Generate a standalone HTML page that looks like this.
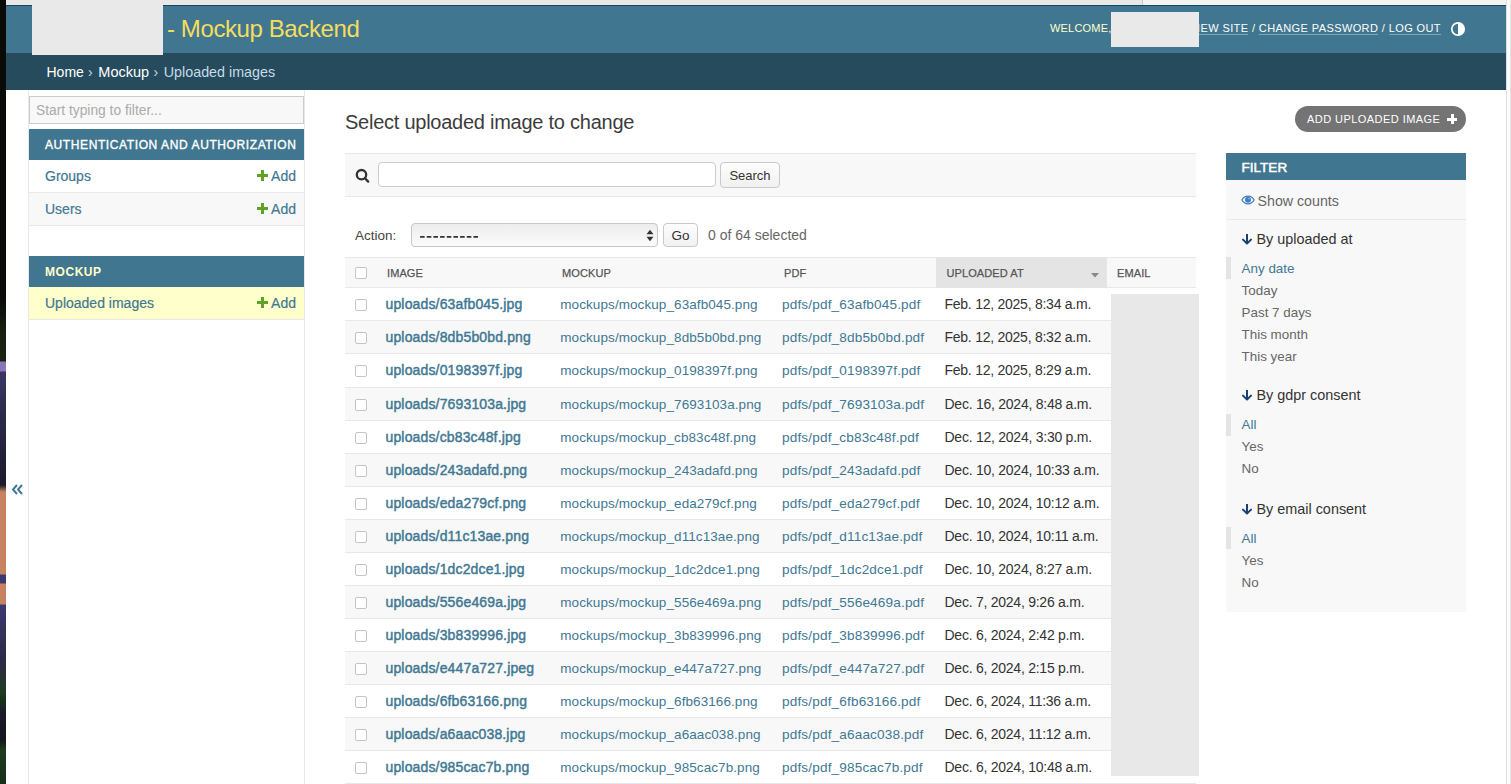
<!DOCTYPE html>
<html><head><meta charset="utf-8">
<style>
*{box-sizing:border-box}
html,body{margin:0;padding:0}
body{width:1511px;height:784px;overflow:hidden;position:relative;background:#fff;font-family:"Liberation Sans",sans-serif;color:#333}
.abs{position:absolute}
a{text-decoration:none;color:#417893}
#wall{left:0;top:0;width:6px;height:784px;background:linear-gradient(180deg,#0a0b09 0px,#0a0b09 300px,#16200f 330px,#1a2414 361px,#8a76b8 362px,#8a76b8 371px,#3a3766 372px,#2a2848 420px,#1c1a2c 485px,#c7835f 492px,#c7835f 574px,#3b3a6e 575px,#3b3a6e 583px,#c7835f 584px,#c7835f 604px,#3b3a6e 605px,#2b2a48 660px,#1f3a1f 692px,#14301a 702px,#1a1a2a 712px,#15151f 740px,#1d3b1d 750px,#15301a 784px)}
#topstrip{left:6px;top:0;width:1500px;height:5px;background:linear-gradient(90deg,#e9e8e6 0,#e9e8e6 1136px,#c8c8c8 1136px,#c8c8c8 1137px,#f3f4f2 1137px)}
#rstrip{left:1506px;top:0;width:5px;height:784px;background:#fcfcfc;border-left:1.5px solid #dedede;border-right:1.5px solid #e6e6e6}
#header{left:6px;top:5px;width:1500px;height:48px;background:#417690;border-top:1px solid #0d4a68}
#logo{left:32px;top:0;width:131px;height:55px;background:#e9e9e9}
#brand{left:167px;top:15px;font-size:24px;color:#f5dd5d;letter-spacing:-0.4px;white-space:nowrap;line-height:28px}
#usertools{left:1050px;top:22px;font-size:11px;letter-spacing:0.4px;color:#ffc;white-space:nowrap;line-height:13px}
#usertools2{right:70px;top:22px;font-size:11px;letter-spacing:0.4px;color:#ffc;white-space:nowrap;line-height:13px}
#usertools2 a{color:#fff;border-bottom:1px solid rgba(255,255,255,0.35)}
#ublock{left:1111px;top:12px;width:88px;height:35px;background:#e9e9e9}
#crumbs{left:6px;top:53px;width:1500px;height:37px;background:#264b5d;color:#c4dce8;font-size:14px;line-height:17px;padding:11px 0 0 40px;white-space:nowrap}
#crumbs a{color:#fff}
#toggle{left:6px;top:90px;width:23px;height:694px;border-right:1px solid #e8e8e8;background:#fff}
#nav{left:29px;top:90px;width:276px;height:694px;border-right:1px solid #e8e8e8}

#navfilter{left:29px;top:96px;width:275px;height:28px;border:1px solid #ccc;background:#f8f8f8;color:#ababab;font-size:13.8px;line-height:28px;padding-left:6px;white-space:nowrap}
.cap{position:absolute;left:29px;width:275px;background:#417690;color:#fff;font-size:12px;letter-spacing:0.6px;padding-left:16px;white-space:nowrap}
.nrow{position:absolute;left:29px;width:275px;border-bottom:1px solid #e8e8e8;font-size:14px;white-space:nowrap;padding-left:16px}
.nrow a{color:#417893;-webkit-text-stroke:0.2px #417893}
.addl{position:absolute;right:8px;color:#417893;-webkit-text-stroke:0.2px #417893}
.plus{display:inline-block;position:relative;width:11px;height:11px;margin-right:3px;vertical-align:0px}
.plus:before{content:"";position:absolute;left:0;top:4px;width:11px;height:3px;background:#5fa225}
.plus:after{content:"";position:absolute;left:4px;top:0;width:3px;height:11px;background:#5fa225}

#h1{left:345px;top:110px;font-size:20px;letter-spacing:-0.25px;color:#3c3c3c;line-height:24px;white-space:nowrap}
#addbtn{left:1295px;top:106px;width:171px;height:26px;border-radius:13px;background:#747474;color:#fff;font-size:11px;letter-spacing:0.45px;line-height:26px;padding-left:12px;white-space:nowrap}
.wplus{position:absolute;width:10px;height:10px}
.wplus:before{content:"";position:absolute;left:0;top:3.5px;width:10px;height:3px;background:#fff}
.wplus:after{content:"";position:absolute;left:3.5px;top:0;width:3px;height:10px;background:#fff}
#toolbar{left:345px;top:153px;width:851px;height:44px;background:#f8f8f8;border-top:1px solid #e8e8e8;border-bottom:1px solid #e8e8e8}
#sinput{left:378px;top:162px;width:338px;height:25px;border:1px solid #ccc;border-radius:4px;background:#fff}
.btn{position:absolute;border:1px solid #c9c9c9;border-radius:4px;background:linear-gradient(#fdfdfd,#f1f1f1);color:#333;font-size:13px;text-align:center;white-space:nowrap}
#actlabel{left:355px;top:228px;font-size:13.5px;color:#444;line-height:16px;white-space:nowrap}
#select{left:411px;top:223px;width:247px;height:24px;border:1px solid #c6c6c6;border-radius:4px;background:linear-gradient(#ededed,#fbfbfb);font-size:13px;white-space:nowrap}
#selcount{left:708px;top:227px;font-size:14px;color:#666;line-height:17px;white-space:nowrap}
.t{position:absolute;white-space:nowrap}
.cb{position:absolute;width:12px;height:12px;border:1px solid #c4c4c4;border-radius:2px;background:#fff}
</style></head><body>
<div id="wall" class="abs"></div>
<div id="topstrip" class="abs"></div>
<div id="header" class="abs"></div>
<div id="brand" class="abs">- Mockup Backend</div>
<div id="usertools" class="abs" style="left:1050px;letter-spacing:0.2px">WELCOME,</div>
<div id="usertools2" class="abs"><a>VIEW SITE</a> / <a>CHANGE PASSWORD</a> / <a>LOG OUT</a></div>
<svg class="abs" style="left:1450px;top:21px" width="16" height="16" viewBox="0 0 16 16"><circle cx="8" cy="8" r="6.2" fill="none" stroke="#fff" stroke-width="1.7"/><path d="M8 1.8A6.2 6.2 0 0 1 8 14.2Z" fill="#fff"/></svg>
<div id="ublock" class="abs"></div>
<div id="crumbs" class="abs"></div>
<div class="t" style="left:46.5px;top:64px;font-size:14px;line-height:17px;color:#fff">Home</div>
<div class="t" style="left:88px;top:64px;font-size:14px;line-height:17px;color:#c4dce8">›</div>
<div class="t" style="left:98.3px;top:64px;font-size:14.5px;line-height:17px;color:#fff">Mockup</div>
<div class="t" style="left:153.5px;top:64px;font-size:14px;line-height:17px;color:#c4dce8">›</div>
<div class="t" style="left:163.8px;top:64px;font-size:14.3px;line-height:17px;color:#c4dce8">Uploaded images</div>
<div id="logo" class="abs"></div>
<div id="rstrip" class="abs"></div>
<div id="toggle" class="abs"></div>
<div id="nav" class="abs"></div>

<div id="navfilter" class="abs">Start typing to filter...</div>
<div class="cap" style="top:129px;height:31px;line-height:33px;-webkit-text-stroke:0.35px #fff">AUTHENTICATION AND AUTHORIZATION</div>
<div class="nrow" style="top:160px;height:33px;line-height:32px;background:#fff"><a>Groups</a><span class="addl"><span class="plus"></span>Add</span></div>
<div class="nrow" style="top:193px;height:33px;line-height:32px;background:#f8f8f8"><a>Users</a><span class="addl"><span class="plus"></span>Add</span></div>
<div class="cap" style="top:256px;height:31px;line-height:33px;color:#ffc;font-weight:700;letter-spacing:0.55px">MOCKUP</div>
<div class="nrow" style="top:287px;height:33px;line-height:32px;background:#ffc"><a>Uploaded images</a><span class="addl"><span class="plus"></span>Add</span></div>
<svg class="abs" style="left:10px;top:482px" width="16" height="14" viewBox="0 0 16 14"><path d="M7 3L3 7.5L7 12M12 3L8 7.5L12 12" fill="none" stroke="#417893" stroke-width="2" stroke-linejoin="miter" stroke-linecap="butt"/></svg>

<div id="h1" class="abs">Select uploaded image to change</div>
<div id="addbtn" class="abs">ADD UPLOADED IMAGE<span class="wplus" style="left:152px;top:8px"></span></div>
<div id="toolbar" class="abs"></div>
<svg class="abs" style="left:354px;top:167px" width="16" height="17" viewBox="0 0 16 17"><circle cx="7.5" cy="7.7" r="4.7" fill="none" stroke="#333" stroke-width="2.3"/><line x1="11" y1="11.2" x2="14.2" y2="14.6" stroke="#333" stroke-width="2.3" stroke-linecap="round"/></svg>
<div id="sinput" class="abs"></div>
<div class="btn" style="left:720px;top:162px;width:60px;height:26px;line-height:26px">Search</div>
<div id="actlabel" class="abs">Action:</div>
<div id="select" class="abs"><svg style="position:absolute;left:8.2px;top:11.5px" width="60" height="3"><rect x="0.00" y="0" width="4.7" height="1.7" rx="0.5" fill="#333"/><rect x="6.67" y="0" width="4.7" height="1.7" rx="0.5" fill="#333"/><rect x="13.34" y="0" width="4.7" height="1.7" rx="0.5" fill="#333"/><rect x="20.01" y="0" width="4.7" height="1.7" rx="0.5" fill="#333"/><rect x="26.68" y="0" width="4.7" height="1.7" rx="0.5" fill="#333"/><rect x="33.35" y="0" width="4.7" height="1.7" rx="0.5" fill="#333"/><rect x="40.02" y="0" width="4.7" height="1.7" rx="0.5" fill="#333"/><rect x="46.69" y="0" width="4.7" height="1.7" rx="0.5" fill="#333"/><rect x="53.36" y="0" width="4.7" height="1.7" rx="0.5" fill="#333"/></svg>
<svg style="position:absolute;left:234px;top:5px" width="8" height="13" viewBox="0 0 8 13"><path d="M0.5 5.2 L4 0.8 L7.5 5.2Z M0.5 7.8 L4 12.2 L7.5 7.8Z" fill="#333"/></svg></div>
<div class="btn" style="left:663px;top:223px;width:35px;height:24px;line-height:24px;font-size:13.5px">Go</div>
<div id="selcount" class="abs">0 of 64 selected</div>
<!--TABLE-->
<div class="abs" style="left:345px;top:257px;width:851px;height:31px;background:#f8f8f8;border-top:1px solid #e8e8e8;border-bottom:1px solid #e8e8e8"></div>
<div class="abs" style="left:936px;top:257px;width:171px;height:31px;background:#e4e4e4"></div>
<div class="cb" style="left:355px;top:267px"></div>
<div class="t" style="left:387px;top:266.39px;font-size:11px;line-height:14px;color:#555;font-weight:400;letter-spacing:0.1px;-webkit-text-stroke:0.25px #555;">IMAGE</div>
<div class="t" style="left:562px;top:266.39px;font-size:11px;line-height:14px;color:#555;font-weight:400;letter-spacing:0.1px;-webkit-text-stroke:0.25px #555;">MOCKUP</div>
<div class="t" style="left:784px;top:266.39px;font-size:11px;line-height:14px;color:#555;font-weight:400;letter-spacing:0.1px;-webkit-text-stroke:0.25px #555;">PDF</div>
<div class="t" style="left:946.5px;top:266.39px;font-size:11px;line-height:14px;color:#555;font-weight:400;letter-spacing:0.1px;-webkit-text-stroke:0.25px #555;">UPLOADED AT</div>
<div class="t" style="left:1117px;top:266.39px;font-size:11px;line-height:14px;color:#555;font-weight:400;letter-spacing:0.1px;-webkit-text-stroke:0.25px #555;">EMAIL</div>
<svg class="abs" style="left:1091px;top:273px" width="8" height="5" viewBox="0 0 8 5"><path d="M0 0H8L4 4.6Z" fill="#888"/></svg>
<div class="abs" style="left:345px;top:288px;width:851px;height:33px;background:#fff;border-bottom:1px solid #e8e8e8"></div>
<div class="cb" style="left:355px;top:299px"></div>
<div class="t" style="left:385.5px;top:295.15px;font-size:14px;line-height:18px;color:#417893;font-weight:400;letter-spacing:0.15px;-webkit-text-stroke:0.45px #417893;">uploads/63afb045.jpg</div>
<div class="t" style="left:560.3px;top:295.82px;font-size:13.5px;line-height:17px;color:#417893;font-weight:400;letter-spacing:0.08px;">mockups/mockup_63afb045.png</div>
<div class="t" style="left:782px;top:295.79px;font-size:13.6px;line-height:17px;color:#417893;font-weight:400;letter-spacing:0.15px;">pdfs/pdf_63afb045.pdf</div>
<div class="t" style="left:944.5px;top:295.15px;font-size:14px;line-height:18px;color:#333;font-weight:400;letter-spacing:-0.25px;">Feb. 12, 2025, 8:34 a.m.</div>
<div class="abs" style="left:345px;top:321px;width:851px;height:33px;background:#f8f8f8;border-bottom:1px solid #e8e8e8"></div>
<div class="cb" style="left:355px;top:332px"></div>
<div class="t" style="left:385.5px;top:328.15px;font-size:14px;line-height:18px;color:#417893;font-weight:400;letter-spacing:0.15px;-webkit-text-stroke:0.45px #417893;">uploads/8db5b0bd.png</div>
<div class="t" style="left:560.3px;top:328.82px;font-size:13.5px;line-height:17px;color:#417893;font-weight:400;letter-spacing:0.08px;">mockups/mockup_8db5b0bd.png</div>
<div class="t" style="left:782px;top:328.79px;font-size:13.6px;line-height:17px;color:#417893;font-weight:400;letter-spacing:0.15px;">pdfs/pdf_8db5b0bd.pdf</div>
<div class="t" style="left:944.5px;top:328.15px;font-size:14px;line-height:18px;color:#333;font-weight:400;letter-spacing:-0.25px;">Feb. 12, 2025, 8:32 a.m.</div>
<div class="abs" style="left:345px;top:354px;width:851px;height:34px;background:#fff;border-bottom:1px solid #e8e8e8"></div>
<div class="cb" style="left:355px;top:365px"></div>
<div class="t" style="left:385.5px;top:361.15px;font-size:14px;line-height:18px;color:#417893;font-weight:400;letter-spacing:0.15px;-webkit-text-stroke:0.45px #417893;">uploads/0198397f.jpg</div>
<div class="t" style="left:560.3px;top:361.82px;font-size:13.5px;line-height:17px;color:#417893;font-weight:400;letter-spacing:0.08px;">mockups/mockup_0198397f.png</div>
<div class="t" style="left:782px;top:361.79px;font-size:13.6px;line-height:17px;color:#417893;font-weight:400;letter-spacing:0.15px;">pdfs/pdf_0198397f.pdf</div>
<div class="t" style="left:944.5px;top:361.15px;font-size:14px;line-height:18px;color:#333;font-weight:400;letter-spacing:-0.25px;">Feb. 12, 2025, 8:29 a.m.</div>
<div class="abs" style="left:345px;top:388px;width:851px;height:33px;background:#f8f8f8;border-bottom:1px solid #e8e8e8"></div>
<div class="cb" style="left:355px;top:399px"></div>
<div class="t" style="left:385.5px;top:395.15px;font-size:14px;line-height:18px;color:#417893;font-weight:400;letter-spacing:0.15px;-webkit-text-stroke:0.45px #417893;">uploads/7693103a.jpg</div>
<div class="t" style="left:560.3px;top:395.82px;font-size:13.5px;line-height:17px;color:#417893;font-weight:400;letter-spacing:0.08px;">mockups/mockup_7693103a.png</div>
<div class="t" style="left:782px;top:395.79px;font-size:13.6px;line-height:17px;color:#417893;font-weight:400;letter-spacing:0.15px;">pdfs/pdf_7693103a.pdf</div>
<div class="t" style="left:944.5px;top:395.15px;font-size:14px;line-height:18px;color:#333;font-weight:400;letter-spacing:-0.25px;">Dec. 16, 2024, 8:48 a.m.</div>
<div class="abs" style="left:345px;top:421px;width:851px;height:33px;background:#fff;border-bottom:1px solid #e8e8e8"></div>
<div class="cb" style="left:355px;top:432px"></div>
<div class="t" style="left:385.5px;top:428.15px;font-size:14px;line-height:18px;color:#417893;font-weight:400;letter-spacing:0.15px;-webkit-text-stroke:0.45px #417893;">uploads/cb83c48f.jpg</div>
<div class="t" style="left:560.3px;top:428.82px;font-size:13.5px;line-height:17px;color:#417893;font-weight:400;letter-spacing:0.08px;">mockups/mockup_cb83c48f.png</div>
<div class="t" style="left:782px;top:428.79px;font-size:13.6px;line-height:17px;color:#417893;font-weight:400;letter-spacing:0.15px;">pdfs/pdf_cb83c48f.pdf</div>
<div class="t" style="left:944.5px;top:428.15px;font-size:14px;line-height:18px;color:#333;font-weight:400;letter-spacing:-0.25px;">Dec. 12, 2024, 3:30 p.m.</div>
<div class="abs" style="left:345px;top:454px;width:851px;height:33px;background:#f8f8f8;border-bottom:1px solid #e8e8e8"></div>
<div class="cb" style="left:355px;top:465px"></div>
<div class="t" style="left:385.5px;top:461.15px;font-size:14px;line-height:18px;color:#417893;font-weight:400;letter-spacing:0.15px;-webkit-text-stroke:0.45px #417893;">uploads/243adafd.png</div>
<div class="t" style="left:560.3px;top:461.82px;font-size:13.5px;line-height:17px;color:#417893;font-weight:400;letter-spacing:0.08px;">mockups/mockup_243adafd.png</div>
<div class="t" style="left:782px;top:461.79px;font-size:13.6px;line-height:17px;color:#417893;font-weight:400;letter-spacing:0.15px;">pdfs/pdf_243adafd.pdf</div>
<div class="t" style="left:944.5px;top:461.15px;font-size:14px;line-height:18px;color:#333;font-weight:400;letter-spacing:-0.25px;">Dec. 10, 2024, 10:33 a.m.</div>
<div class="abs" style="left:345px;top:487px;width:851px;height:33px;background:#fff;border-bottom:1px solid #e8e8e8"></div>
<div class="cb" style="left:355px;top:498px"></div>
<div class="t" style="left:385.5px;top:494.15px;font-size:14px;line-height:18px;color:#417893;font-weight:400;letter-spacing:0.15px;-webkit-text-stroke:0.45px #417893;">uploads/eda279cf.png</div>
<div class="t" style="left:560.3px;top:494.82px;font-size:13.5px;line-height:17px;color:#417893;font-weight:400;letter-spacing:0.08px;">mockups/mockup_eda279cf.png</div>
<div class="t" style="left:782px;top:494.79px;font-size:13.6px;line-height:17px;color:#417893;font-weight:400;letter-spacing:0.15px;">pdfs/pdf_eda279cf.pdf</div>
<div class="t" style="left:944.5px;top:494.15px;font-size:14px;line-height:18px;color:#333;font-weight:400;letter-spacing:-0.25px;">Dec. 10, 2024, 10:12 a.m.</div>
<div class="abs" style="left:345px;top:520px;width:851px;height:33px;background:#f8f8f8;border-bottom:1px solid #e8e8e8"></div>
<div class="cb" style="left:355px;top:531px"></div>
<div class="t" style="left:385.5px;top:527.15px;font-size:14px;line-height:18px;color:#417893;font-weight:400;letter-spacing:0.15px;-webkit-text-stroke:0.45px #417893;">uploads/d11c13ae.png</div>
<div class="t" style="left:560.3px;top:527.82px;font-size:13.5px;line-height:17px;color:#417893;font-weight:400;letter-spacing:0.08px;">mockups/mockup_d11c13ae.png</div>
<div class="t" style="left:782px;top:527.79px;font-size:13.6px;line-height:17px;color:#417893;font-weight:400;letter-spacing:0.15px;">pdfs/pdf_d11c13ae.pdf</div>
<div class="t" style="left:944.5px;top:527.15px;font-size:14px;line-height:18px;color:#333;font-weight:400;letter-spacing:-0.25px;">Dec. 10, 2024, 10:11 a.m.</div>
<div class="abs" style="left:345px;top:553px;width:851px;height:33px;background:#fff;border-bottom:1px solid #e8e8e8"></div>
<div class="cb" style="left:355px;top:564px"></div>
<div class="t" style="left:385.5px;top:560.15px;font-size:14px;line-height:18px;color:#417893;font-weight:400;letter-spacing:0.15px;-webkit-text-stroke:0.45px #417893;">uploads/1dc2dce1.jpg</div>
<div class="t" style="left:560.3px;top:560.82px;font-size:13.5px;line-height:17px;color:#417893;font-weight:400;letter-spacing:0.08px;">mockups/mockup_1dc2dce1.png</div>
<div class="t" style="left:782px;top:560.79px;font-size:13.6px;line-height:17px;color:#417893;font-weight:400;letter-spacing:0.15px;">pdfs/pdf_1dc2dce1.pdf</div>
<div class="t" style="left:944.5px;top:560.15px;font-size:14px;line-height:18px;color:#333;font-weight:400;letter-spacing:-0.25px;">Dec. 10, 2024, 8:27 a.m.</div>
<div class="abs" style="left:345px;top:586px;width:851px;height:33px;background:#f8f8f8;border-bottom:1px solid #e8e8e8"></div>
<div class="cb" style="left:355px;top:597px"></div>
<div class="t" style="left:385.5px;top:593.15px;font-size:14px;line-height:18px;color:#417893;font-weight:400;letter-spacing:0.15px;-webkit-text-stroke:0.45px #417893;">uploads/556e469a.jpg</div>
<div class="t" style="left:560.3px;top:593.82px;font-size:13.5px;line-height:17px;color:#417893;font-weight:400;letter-spacing:0.08px;">mockups/mockup_556e469a.png</div>
<div class="t" style="left:782px;top:593.79px;font-size:13.6px;line-height:17px;color:#417893;font-weight:400;letter-spacing:0.15px;">pdfs/pdf_556e469a.pdf</div>
<div class="t" style="left:944.5px;top:593.15px;font-size:14px;line-height:18px;color:#333;font-weight:400;letter-spacing:-0.25px;">Dec. 7, 2024, 9:26 a.m.</div>
<div class="abs" style="left:345px;top:619px;width:851px;height:33px;background:#fff;border-bottom:1px solid #e8e8e8"></div>
<div class="cb" style="left:355px;top:630px"></div>
<div class="t" style="left:385.5px;top:626.15px;font-size:14px;line-height:18px;color:#417893;font-weight:400;letter-spacing:0.15px;-webkit-text-stroke:0.45px #417893;">uploads/3b839996.jpg</div>
<div class="t" style="left:560.3px;top:626.82px;font-size:13.5px;line-height:17px;color:#417893;font-weight:400;letter-spacing:0.08px;">mockups/mockup_3b839996.png</div>
<div class="t" style="left:782px;top:626.79px;font-size:13.6px;line-height:17px;color:#417893;font-weight:400;letter-spacing:0.15px;">pdfs/pdf_3b839996.pdf</div>
<div class="t" style="left:944.5px;top:626.15px;font-size:14px;line-height:18px;color:#333;font-weight:400;letter-spacing:-0.25px;">Dec. 6, 2024, 2:42 p.m.</div>
<div class="abs" style="left:345px;top:652px;width:851px;height:33px;background:#f8f8f8;border-bottom:1px solid #e8e8e8"></div>
<div class="cb" style="left:355px;top:663px"></div>
<div class="t" style="left:385.5px;top:659.15px;font-size:14px;line-height:18px;color:#417893;font-weight:400;letter-spacing:0.15px;-webkit-text-stroke:0.45px #417893;">uploads/e447a727.jpeg</div>
<div class="t" style="left:560.3px;top:659.82px;font-size:13.5px;line-height:17px;color:#417893;font-weight:400;letter-spacing:0.08px;">mockups/mockup_e447a727.png</div>
<div class="t" style="left:782px;top:659.79px;font-size:13.6px;line-height:17px;color:#417893;font-weight:400;letter-spacing:0.15px;">pdfs/pdf_e447a727.pdf</div>
<div class="t" style="left:944.5px;top:659.15px;font-size:14px;line-height:18px;color:#333;font-weight:400;letter-spacing:-0.25px;">Dec. 6, 2024, 2:15 p.m.</div>
<div class="abs" style="left:345px;top:685px;width:851px;height:33px;background:#fff;border-bottom:1px solid #e8e8e8"></div>
<div class="cb" style="left:355px;top:696px"></div>
<div class="t" style="left:385.5px;top:692.15px;font-size:14px;line-height:18px;color:#417893;font-weight:400;letter-spacing:0.15px;-webkit-text-stroke:0.45px #417893;">uploads/6fb63166.png</div>
<div class="t" style="left:560.3px;top:692.82px;font-size:13.5px;line-height:17px;color:#417893;font-weight:400;letter-spacing:0.08px;">mockups/mockup_6fb63166.png</div>
<div class="t" style="left:782px;top:692.79px;font-size:13.6px;line-height:17px;color:#417893;font-weight:400;letter-spacing:0.15px;">pdfs/pdf_6fb63166.pdf</div>
<div class="t" style="left:944.5px;top:692.15px;font-size:14px;line-height:18px;color:#333;font-weight:400;letter-spacing:-0.25px;">Dec. 6, 2024, 11:36 a.m.</div>
<div class="abs" style="left:345px;top:718px;width:851px;height:33px;background:#f8f8f8;border-bottom:1px solid #e8e8e8"></div>
<div class="cb" style="left:355px;top:729px"></div>
<div class="t" style="left:385.5px;top:725.15px;font-size:14px;line-height:18px;color:#417893;font-weight:400;letter-spacing:0.15px;-webkit-text-stroke:0.45px #417893;">uploads/a6aac038.jpg</div>
<div class="t" style="left:560.3px;top:725.82px;font-size:13.5px;line-height:17px;color:#417893;font-weight:400;letter-spacing:0.08px;">mockups/mockup_a6aac038.png</div>
<div class="t" style="left:782px;top:725.79px;font-size:13.6px;line-height:17px;color:#417893;font-weight:400;letter-spacing:0.15px;">pdfs/pdf_a6aac038.pdf</div>
<div class="t" style="left:944.5px;top:725.15px;font-size:14px;line-height:18px;color:#333;font-weight:400;letter-spacing:-0.25px;">Dec. 6, 2024, 11:12 a.m.</div>
<div class="abs" style="left:345px;top:751px;width:851px;height:33px;background:#fff;border-bottom:1px solid #e8e8e8"></div>
<div class="cb" style="left:355px;top:762px"></div>
<div class="t" style="left:385.5px;top:758.15px;font-size:14px;line-height:18px;color:#417893;font-weight:400;letter-spacing:0.15px;-webkit-text-stroke:0.45px #417893;">uploads/985cac7b.png</div>
<div class="t" style="left:560.3px;top:758.82px;font-size:13.5px;line-height:17px;color:#417893;font-weight:400;letter-spacing:0.08px;">mockups/mockup_985cac7b.png</div>
<div class="t" style="left:782px;top:758.79px;font-size:13.6px;line-height:17px;color:#417893;font-weight:400;letter-spacing:0.15px;">pdfs/pdf_985cac7b.pdf</div>
<div class="t" style="left:944.5px;top:758.15px;font-size:14px;line-height:18px;color:#333;font-weight:400;letter-spacing:-0.25px;">Dec. 6, 2024, 10:48 a.m.</div>
<div class="abs" style="left:1111px;top:294px;width:88px;height:482px;background:#e8e8e8"></div>
<!--/TABLE-->
<!--FILTER-->
<div class="abs" style="left:1226px;top:153px;width:240px;height:459px;background:#f8f8f8"></div>
<div class="abs" style="left:1226px;top:153px;width:240px;height:27px;background:#417690"></div>
<div class="t" style="left:1241.4px;top:158.72px;font-size:13.5px;line-height:17px;color:#fff;font-weight:400;letter-spacing:0.05px;-webkit-text-stroke:0.5px #fff;">FILTER</div>
<div class="abs" style="left:1226px;top:219px;width:240px;height:1px;background:linear-gradient(90deg,#f0f0f0,#e6e6e6 3%,#e6e6e6)"></div>
<svg class="abs" style="left:1241px;top:195px" width="14" height="10" viewBox="0 0 14 10"><path d="M7 1.2C4.2 1.2 2 3 0.9 5C2 7 4.2 8.8 7 8.8C9.8 8.8 12 7 13.1 5C12 3 9.8 1.2 7 1.2Z" fill="none" stroke="#447ec4" stroke-width="1.3"/><circle cx="7" cy="4.7" r="3" fill="#447ec4"/><circle cx="8" cy="3.6" r="0.9" fill="#8fb3e0"/></svg>
<div class="t" style="left:1257.6px;top:191.58px;font-size:14.2px;line-height:18px;color:#666;font-weight:400;letter-spacing:0px;">Show counts</div>
<svg class="abs" style="left:1241.7px;top:233.8px" width="10" height="11" viewBox="0 0 10 11"><path d="M5 0.5V9.5M1 5.6L5 9.6L9 5.6" fill="none" stroke="#1c3f6e" stroke-width="2" stroke-linecap="round" stroke-linejoin="round"/></svg>
<div class="t" style="left:1256.5px;top:229.81px;font-size:14.4px;line-height:18px;color:#333;font-weight:400;letter-spacing:0px;">By uploaded at</div>
<div class="abs" style="left:1226px;top:256.8px;width:5px;height:22px;background:#e4e4e4"></div>
<div class="t" style="left:1241.6px;top:259.66px;font-size:13.4px;line-height:17px;color:#417893;font-weight:400;letter-spacing:0px;">Any date</div>
<div class="t" style="left:1241.6px;top:281.66px;font-size:13.4px;line-height:17px;color:#666;font-weight:400;letter-spacing:0px;">Today</div>
<div class="t" style="left:1241.6px;top:303.66px;font-size:13.4px;line-height:17px;color:#666;font-weight:400;letter-spacing:0px;">Past 7 days</div>
<div class="t" style="left:1241.6px;top:325.66px;font-size:13.4px;line-height:17px;color:#666;font-weight:400;letter-spacing:0px;">This month</div>
<div class="t" style="left:1241.6px;top:347.66px;font-size:13.4px;line-height:17px;color:#666;font-weight:400;letter-spacing:0px;">This year</div>
<svg class="abs" style="left:1241.7px;top:390.2px" width="10" height="11" viewBox="0 0 10 11"><path d="M5 0.5V9.5M1 5.6L5 9.6L9 5.6" fill="none" stroke="#1c3f6e" stroke-width="2" stroke-linecap="round" stroke-linejoin="round"/></svg>
<div class="t" style="left:1256.5px;top:386.21px;font-size:14.4px;line-height:18px;color:#333;font-weight:400;letter-spacing:0px;">By gdpr consent</div>
<div class="abs" style="left:1226px;top:413.5px;width:5px;height:22px;background:#e4e4e4"></div>
<div class="t" style="left:1241.6px;top:416.36px;font-size:13.4px;line-height:17px;color:#417893;font-weight:400;letter-spacing:0px;">All</div>
<div class="t" style="left:1241.6px;top:438.36px;font-size:13.4px;line-height:17px;color:#666;font-weight:400;letter-spacing:0px;">Yes</div>
<div class="t" style="left:1241.6px;top:460.36px;font-size:13.4px;line-height:17px;color:#666;font-weight:400;letter-spacing:0px;">No</div>
<svg class="abs" style="left:1241.7px;top:503.70000000000005px" width="10" height="11" viewBox="0 0 10 11"><path d="M5 0.5V9.5M1 5.6L5 9.6L9 5.6" fill="none" stroke="#1c3f6e" stroke-width="2" stroke-linecap="round" stroke-linejoin="round"/></svg>
<div class="t" style="left:1256.5px;top:499.71px;font-size:14.4px;line-height:18px;color:#333;font-weight:400;letter-spacing:0px;">By email consent</div>
<div class="abs" style="left:1226px;top:526.8px;width:5px;height:22px;background:#e4e4e4"></div>
<div class="t" style="left:1241.6px;top:529.66px;font-size:13.4px;line-height:17px;color:#417893;font-weight:400;letter-spacing:0px;">All</div>
<div class="t" style="left:1241.6px;top:551.66px;font-size:13.4px;line-height:17px;color:#666;font-weight:400;letter-spacing:0px;">Yes</div>
<div class="t" style="left:1241.6px;top:573.66px;font-size:13.4px;line-height:17px;color:#666;font-weight:400;letter-spacing:0px;">No</div>
<!--/FILTER-->
</body></html>
